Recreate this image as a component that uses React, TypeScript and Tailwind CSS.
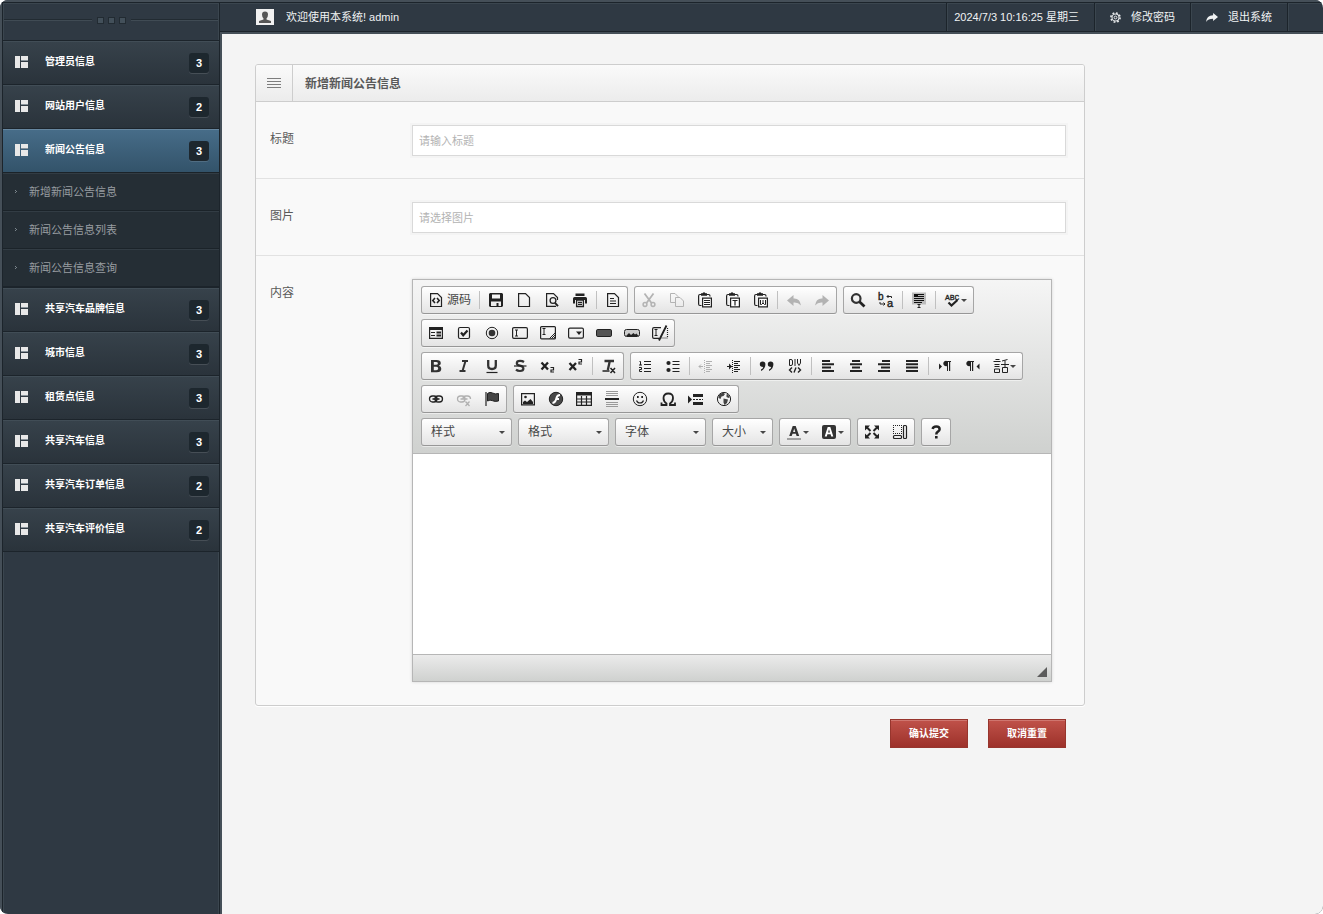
import { useState, type ReactNode } from 'react';

const dark = '#222222';

const line = { fill: 'none', stroke: dark, strokeWidth: 1.2 } as const;
const page = <path d="M2.6 1.6h6.9l4 4v8.9H2.6z" {...line} />;
const clipboard = (
  <>
    <path d="M4 2.5H3Q1.6 2.5 1.6 4v8Q1.6 13.5 3 13.5h1.5M10 2.5h1.5Q13 2.5 13 4v.5" {...line} />
    <path d="M4 1.2h1.5q1.5-1.8 3 0H10v2.500H4z" fill={dark} />
    <path d="M5.6 6.1h8.8v8.8H5.6z" fill="#fff" stroke={dark} strokeWidth={1.2} />
  </>
);

const icons: Record<string, ReactNode> = {
  source: (
    <>
      {page}
      <path d="M7 6 4.8 8.5 7 11M9 6l2.2 2.5L9 11" {...line} strokeWidth={1.6} />
    </>
  ),
  save: (
    <path fillRule="evenodd" fill={dark} d="M2 1h12l1 1v12l-1 1H2l-1-1V2zM4 2.4v4h8v-4zM3 9.5V14h2V9.5zM5 9.500V14h3.500v-3h2v3H13V9.500z" />
  ),
  newpage: page,
  preview: (
    <>
      <path d="M12 14.400H2.600V1.600h6.900l4 4V8" {...line} />
      <circle cx="9" cy="8.500" r="2.900" {...line} strokeWidth={1.300} />
      <path d="m11 10.800 3 3.400" {...line} strokeWidth={1.900} />
    </>
  ),
  print: (
    <>
      <path d="M3.500 1.500h9v2.500h-9z" fill={dark} />
      <path d="M1 6.500Q1 5 2.500 5h11Q15 5 15 6.500v5h-2V8H3v3.500H1z" fill={dark} />
      <path d="M4.600 8h6.800v6.500H4.600zM6 10.300h4M6 12.300h4" {...line} strokeWidth={1.300} />
    </>
  ),
  templates: (
    <>
      {page}
      <path d="M5 6.500h4M5 9h6M5 11.500h6" {...line} />
    </>
  ),
  cut: (
    <g fill="none" stroke="#b3b3b3" strokeWidth={1.8}>
      <path d="m3.500 1.500 7 9.500M12.500 1.500l-7 9.500" />
      <circle cx="4" cy="12.500" r="1.900" strokeWidth={1.500} />
      <circle cx="12" cy="12.500" r="1.900" strokeWidth={1.500} />
    </g>
  ),
  copy: (
    <path d="M6 10.500H1.500v-9H6l3 3V6M6.500 5.500H11l3.500 3.500v5.500h-8z" fill="none" stroke="#b3b3b3" />
  ),
  paste: (
    <>
      {clipboard}
      <path d="M7 8.500h6M7 10.500h6M7 12.500h6" {...line} strokeWidth={1} />
    </>
  ),
  pastetext: (
    <>
      {clipboard}
      <path d="M7.500 8.500h5M10 8.500v5" {...line} />
    </>
  ),
  pasteword: (
    <>
      {clipboard}
      <path d="M7.500 8v4.500h1l1.500-1.500 1.500 1.500h1V8M10 8v3.500" {...line} strokeWidth={1} />
    </>
  ),
  undo: <path d="M1 8.500 7.500 3v3.500q6.500-.5 7.500 7-3-3.500-7.500-3V14z" fill="#b3b3b3" />,
  redo: <path d="M15 8.500 8.500 3v3.500Q2 6 1 13.500q3-3.500 7.500-3V14z" fill="#b3b3b3" />,
  find: (
    <>
      <circle cx="6.200" cy="6.500" r="4.300" {...line} strokeWidth={2.200} stroke="#333" />
      <path d="m9.500 9.800 5 4.700" {...line} strokeWidth={2.800} />
    </>
  ),
  replace: (
    <>
      <text x="0" y="8" fontSize="10" fontFamily="Liberation Sans" fill={dark} stroke={dark} strokeWidth=".4">b</text>
      <text x="9" y="14.500" fontSize="11" fontFamily="Liberation Sans" fill={dark} stroke={dark} strokeWidth=".4">a</text>
      <path d="M13.500 6V4.500H9M10.500 3l-1.500 1.500L10.500 6M2 10v2h5M5.500 10.500 7 12l-1.500 1.500" {...line} strokeWidth={1} />
    </>
  ),
  selectall: (
    <>
      <path d="M1 .5h14v12H1z" fill="#bdbdbd" />
      <path d="M3 2.500h10M3 4.500h10M3 6.500h10M3 8.500h10M3 10.500h8" stroke="#111" />
      <path d="M3 2h4v3H3z" fill="#111" />
      <path d="M6.500 12.500h3M8 12.500v3M6.500 15.500h3" {...line} strokeWidth={1} />
    </>
  ),
  spell: (
    <>
      <text x="1" y="7.500" fontSize="8" fontFamily="Liberation Mono" fill={dark} stroke={dark} strokeWidth=".3">ABC</text>
      <path d="m4.500 10.500 3 3L13.500 8" {...line} strokeWidth={2.200} />
    </>
  ),
  form: (
    <>
      <path d="M1.600 2.600h12.800v10.800H1.600z" {...line} />
      <path d="M1 2h14v3H1z" fill={dark} />
      <path d="M3 7.500h4M3 10.500h4" {...line} />
      <path d="M8.500 7.500H13M8.500 10.500H13" {...line} strokeWidth={2} />
    </>
  ),
  checkbox: (
    <>
      <rect x="2.500" y="2.500" width="11" height="11" rx="1.500" {...line} />
      <path d="m5 7.500 2.200 2.700L11.500 5.500" {...line} strokeWidth={2.200} />
    </>
  ),
  radio: (
    <>
      <circle cx="8" cy="8" r="5.700" {...line} strokeWidth={1} />
      <circle cx="8" cy="8" r="3.300" fill="#333" />
    </>
  ),
  textfield: (
    <>
      <rect x=".6" y="2.600" width="14.800" height="10.800" rx="1.300" {...line} />
      <path d="M3 5h3M4.500 5v6M3 11h3" {...line} strokeWidth={1} />
    </>
  ),
  textarea: (
    <>
      <rect x=".6" y="1.600" width="14.800" height="12.300" rx="1" {...line} />
      <path d="M2.500 3.500h3M4 3.500v6M2.500 9.500h3M9.500 13.500l5.500-5.500M11.500 13.500l3.500-3.500M13.500 13.500 15 12" {...line} strokeWidth={1} />
    </>
  ),
  select: (
    <>
      <rect x=".6" y="3.100" width="14.800" height="10" rx="1.300" {...line} />
      <path d="M8 6.500h6l-3 3.500z" fill={dark} />
    </>
  ),
  button: <rect x=".5" y="4.500" width="15" height="7" rx="1.300" fill="#555" stroke={dark} />,
  imagebutton: (
    <>
      <rect x=".5" y="4.500" width="15" height="7" rx="2" fill="#ccc" stroke={dark} />
      <path d="m2 11 3-3L7 10l2.500-2L11 9.500l1.500-1 2 2.500z" fill={dark} />
    </>
  ),
  hidden: (
    <>
      <path d="M9 2.600H2Q.6 2.600.6 4v8q0 1.400 1.400 1.400h5" {...line} />
      <path d="M2.500 4.500h3M4 4.500v6M2.500 10.500h3" {...line} strokeWidth={1} />
      <path d="M13 3.500h2.500v9.500H9" {...line} strokeDasharray="1 1" />
      <path d="M14.500 .5 7 15.500" {...line} strokeWidth={1.800} />
    </>
  ),
  bold: <path fillRule="evenodd" fill="#333" d="M3 2h5.500q4.300 0 4.300 3.300 0 1.900-1.900 2.400 2.400.5 2.400 3 0 3.600-4.500 3.600H3zM5.800 4v2.800h2.100q2 0 2-1.400T7.900 4zM5.800 8.800v3.500h2.400q2 0 2-1.800T8.200 8.800z" />,
  italic: <path d="M6 3h6M3.500 13h6M9.500 3 6.500 13" {...line} stroke="#333" strokeWidth={2} />,
  underline: (
    <>
      <path d="M4.200 2v5.500q0 3.500 3.800 3.500t3.800-3.500V2" {...line} stroke="#333" strokeWidth={2.300} />
      <path d="M2.500 14.500h11" {...line} />
    </>
  ),
  strike: (
    <>
      <path d="M12 4Q10.500 2.900 8 2.900q-3.200 0-3.200 2.300Q4.800 7 8 7.600t3.400 2.900Q11.400 13 8 13q-2.500 0-4-1.300" {...line} stroke="#333" strokeWidth={2.200} />
      <path d="M2 8h12.500" {...line} />
    </>
  ),
  subscript: (
    <>
      <path d="m1.500 4.500 6.500 7M8 4.500l-6.500 7" {...line} strokeWidth={2.300} />
      <path d="M10.500 9.500h3v2.500h-2.500v2h3" {...line} />
    </>
  ),
  superscript: (
    <>
      <path d="m1.500 5 6.500 7M8 5l-6.500 7" {...line} strokeWidth={2.300} />
      <path d="M10.500 1.500h3V4h-2.500v2h3" {...line} />
    </>
  ),
  removeformat: (
    <>
      <path d="M3.500 3h9.500M8.800 3 6.800 12" {...line} stroke="#333" strokeWidth={2.300} />
      <path d="M1.500 13h7M9.500 10l4.500 5M14 10l-4.500 5" {...line} strokeWidth={1.500} />
    </>
  ),
  ol: (
    <>
      <path d="M2.500 3.500h1v3.500M2 7h3M2 9.500h2.500v2h-2v2H5" {...line} strokeWidth={1} />
      <path d="M7 3.500h7M7 6.500h7M7 10.500h7M7 13.500h7" {...line} />
    </>
  ),
  ul: (
    <>
      <circle cx="3.500" cy="5" r="2.100" fill={dark} />
      <circle cx="3.500" cy="12" r="2.100" fill={dark} />
      <path d="M7.500 3.500h7M7.500 6.500h7M7.500 10.500h7M7.500 13.500h7" {...line} />
    </>
  ),
  outdent: (
    <g fill="none" stroke="#b0b0b0">
      <path d="M6.500 2v13" strokeDasharray="1 1" />
      <path d="M8 3.500h6M8 5.500h4M8 7.500h6M8 9.500h4M8 11.500h6M8 13.500h4M5 8.500H1M3 6.500l-2 2 2 2" />
    </g>
  ),
  indent: (
    <g fill="none" stroke={dark}>
      <path d="M6.500 2v13" strokeDasharray="1 1" />
      <path d="M8 3.500h6M8 5.500h4M8 7.500h6M8 9.500h4M8 11.500h6M8 13.500h4M1 8.500h5" />
      <path d="M3 5.500 6 8.500l-3 3z" fill={dark} stroke="none" />
    </g>
  ),
  quote: <path fill={dark} d="M.8 6.300a2.800 2.800 0 1 1 5.600 0Q6.400 11 2 13V11.500Q4 10.500 4.200 9 .8 9 .8 6.300zM8.800 6.300a2.800 2.800 0 1 1 5.600 0q0 4.700-4.400 6.700v-1.500q2-1 2.200-2.500-3.400 0-3.400-2.700z" />,
  div: (
    <>
      <path d="M2.500 1.500v6H4q1.500 0 1.500-1.500V3Q5.500 1.500 4 1.500zM8 1v7M10.500 1v4L12 7.500 13.500 5V1" {...line} strokeWidth={1} />
      <path d="m5 9.500-2.500 2.500L5 14.500M11 9.500l2.500 2.500-2.500 2.500M9 9.500l-2 5" {...line} strokeWidth={1.400} />
    </>
  ),
  left: <path d="M2 3h8M2 6.300h12M2 9.600h9M2 13h12" {...line} strokeWidth={2} />,
  center: <path d="M4 3h8M2 6.300h12M4 9.600h8M2 13h12" {...line} strokeWidth={2} />,
  right: <path d="M6 3h8M2 6.300h12M5 9.600h9M2 13h12" {...line} strokeWidth={2} />,
  justify: <path d="M2 3h12M2 6.300h12M2 9.600h12M2 13h12" {...line} strokeWidth={2} />,
  ltr: (
    <>
      <path d="m2 5.500 3 3-3 3z" fill={dark} />
      <path d="M10 8a2.700 2.700 0 1 1 0-5h4v1h-.8v9h-1.200V4H11v9h-1z" fill={dark} />
    </>
  ),
  rtl: (
    <>
      <path d="m14.500 5.500-3 3 3 3z" fill={dark} />
      <path d="M5 8a2.700 2.700 0 1 1 0-5h4v1h-.8v9H7V4H6v9H5z" fill={dark} />
    </>
  ),
  language: (
    <path d="M2.500 1.500h4M.5 3.500h7M1.500 6.500h5M1.500 8.500h5M1.500 11h5v3.500h-5zM14.500 1.500 9 3M12 2.500V9M8 6.500h8M9.500 9.500h5v5h-5z" {...line} strokeWidth={1} />
  ),
  link: (
    <g {...line} strokeWidth={1.300}>
      <rect x="1.500" y="5" width="7.500" height="6" rx="3" />
      <rect x="7" y="5" width="7.500" height="6" rx="3" />
      <path d="M4.500 8h7" strokeWidth={1.600} />
    </g>
  ),
  unlink: (
    <g fill="none" stroke="#b0b0b0" strokeWidth={1.300}>
      <rect x="1.500" y="5" width="7.500" height="6" rx="3" />
      <path d="M7 8q0-3 3-3h1.500q3 0 3 3M4.500 8h7M9.500 10.500l4 4.500M13.500 10.500l-4 4.500" />
    </g>
  ),
  anchor: (
    <>
      <path d="M2 1v14" {...line} />
      <path d="M3.500 2.500Q6 .5 8.500 2t6 .5V10Q11 11 8.500 9.700T3.500 10z" fill="#444" stroke={dark} />
    </>
  ),
  image: (
    <>
      <path d="M1.600 2.600h12.800v11.300H1.600z" {...line} />
      <circle cx="5.500" cy="6" r="1.300" fill={dark} />
      <path d="M3 13v-2l2-1.500 2 1.500 3.500-3L13 11v2z" fill={dark} />
    </>
  ),
  flash: (
    <>
      <circle cx="8" cy="8" r="6.700" fill="#484848" stroke={dark} />
      <path d="M12 4Q9 4 8.300 7.500 7.500 11.500 4.500 12M8 8h3" fill="none" stroke="#fff" strokeWidth="1.900" />
    </>
  ),
  table: (
    <>
      <path d="M.6 2.600h14.800v11.800H.6zM5.500 5v9M10.500 5v9M1 8h14M1 11h14" {...line} />
      <path d="M0 1h16v3.500H0z" fill={dark} />
    </>
  ),
  rule: (
    <>
      <path d="M2 .5h12M2 2.500h12M2 4.500h12M2 11.500h12M2 13.500h12M2 15.500h12" stroke="#999" />
      <path d="M1 8h14" {...line} strokeWidth={2} />
    </>
  ),
  smiley: (
    <>
      <circle cx="8" cy="8" r="6.700" {...line} strokeWidth={1} />
      <path d="M4.500 9.500q1 2.500 3.500 2.500t3.500-2.500" {...line} />
      <path d="M5 5h1.700v2H5zM9.300 5H11v2H9.300z" fill={dark} />
    </>
  ),
  omega: (
    <path d="M1.500 11.500V14H6.500v-1.500Q3.500 10.500 3.500 7 3.500 2.500 8.300 2.500T13 7q0 3.500-3 5.500V14h5v-2.500" {...line} strokeWidth={1.800} />
  ),
  pagebreak: (
    <>
      <path d="m0 4.500 4 4L0 12.500z" fill={dark} />
      <path d="M5 4.500h10M5 12.500h10" {...line} strokeWidth={3} />
      <path d="M5 8.500h10" {...line} strokeDasharray="2 1" />
    </>
  ),
  iframe: (
    <>
      <circle cx="8" cy="8" r="6.600" {...line} strokeWidth={1} />
      <path d="M2.500 5 4 3l3-1.500L9 3 7.500 5l-2 .500-1 2.500-2-1zM11 2.500 14 6l-1.500 1-2-1 0-2zM7.500 7.500l4.500 1-1 3.500-2.500 2-1-2.500z" fill="#444" />
    </>
  ),
  color: (
    <>
      <path d="M1 15h14" stroke="#888" strokeWidth="1.500" />
      <path fillRule="evenodd" d="M6.700 2h3l3.500 10h-2.600l-.7-2.300H6.500L5.700 12H3.200zM8.200 4.500 7.100 8h2.200z" fill="#333" />
    </>
  ),
  background: (
    <>
      <rect x="1" y="1" width="14" height="14" rx="2" fill="#333" />
      <path fillRule="evenodd" d="M6.700 3h2.600l3 9.500h-2.100l-.6-2.200H6.400l-.6 2.200H3.700zM8 5.200 7 8.500h2z" fill="#fff" />
    </>
  ),
  maximize: (
    <>
      <path d="M1 1.500h5L1 6.500zM15 1.500h-5l5 5zM1 14.500h5l-5-5zM15 14.500h-5l5-5z" fill={dark} />
      <path d="m3 3.500 3.500 3.500M13 3.500 9.500 7M3 12.500 6.500 9M13 12.500 9.500 9" {...line} strokeWidth={2} />
    </>
  ),
  blocks: (
    <>
      <path d="M1 1.500h9M1 9.500h9M1.500 1v9M9.500 1v9" {...line} strokeWidth={1} strokeDasharray="1 1" />
      <rect x="1.500" y="11.500" width="8" height="3" rx="1" {...line} />
      <rect x="11.500" y="1.500" width="3" height="13" rx="1" {...line} />
    </>
  ),
  about: (
    <>
      <path d="M4.700 5Q5 2.500 8.300 2.500t3.300 2.700q0 1.500-1.700 2.500T8.300 10.500" {...line} strokeWidth={2.500} />
      <path d="M7 12h2.600v2.500H7z" fill={dark} />
    </>
  ),
};

type Tool = { icon: string; label: string; text?: string; menu?: boolean };
type Item = Tool | '|';

const t = (icon: string, label: string, extra: Partial<Tool> = {}): Tool => ({ icon, label, ...extra });

const documentTools: Item[] = [t('source', '源码', { text: '源码' }), '|', t('save', '保存'), t('newpage', '新建'), t('preview', '预览'), t('print', '打印'), '|', t('templates', '模板')];
const clipboardTools: Item[] = [t('cut', '剪切'), t('copy', '复制'), t('paste', '粘贴'), t('pastetext', '粘贴为无格式文本'), t('pasteword', '从 MS Word 粘贴'), '|', t('undo', '撤消'), t('redo', '重做')];
const editTools: Item[] = [t('find', '查找'), t('replace', '替换'), '|', t('selectall', '全选'), '|', t('spell', '拼写检查', { menu: true })];
const formTools: Item[] = [t('form', '表单'), t('checkbox', '复选框'), t('radio', '单选按钮'), t('textfield', '单行文本'), t('textarea', '多行文本'), t('select', '列表'), t('button', '按钮'), t('imagebutton', '图片按钮'), t('hidden', '隐藏域')];
const styleTools: Item[] = [t('bold', '加粗'), t('italic', '倾斜'), t('underline', '下划线'), t('strike', '删除线'), t('subscript', '下标'), t('superscript', '上标'), '|', t('removeformat', '清除格式')];
const paragraphTools: Item[] = [t('ol', '编号列表'), t('ul', '项目列表'), '|', t('outdent', '减少缩进'), t('indent', '增加缩进'), '|', t('quote', '块引用'), t('div', '创建 DIV'), '|', t('left', '左对齐'), t('center', '居中'), t('right', '右对齐'), t('justify', '两端对齐'), '|', t('ltr', '从左到右'), t('rtl', '从右到左'), t('language', '语言', { menu: true })];
const linkTools: Item[] = [t('link', '超链接'), t('unlink', '取消超链接'), t('anchor', '锚点')];
const insertTools: Item[] = [t('image', '图像'), t('flash', 'Flash'), t('table', '表格'), t('rule', '水平线'), t('smiley', '表情'), t('omega', '特殊符号'), t('pagebreak', '分页符'), t('iframe', 'IFrame')];
const colorTools: Item[] = [t('color', '文本颜色', { menu: true }), t('background', '背景颜色', { menu: true })];
const viewTools: Item[] = [t('maximize', '全屏'), t('blocks', '显示区块')];
const aboutTools: Item[] = [t('about', '关于')];

const groupBox =
  'flex h-7 items-center rounded-[3px] border border-[#a6a6a6] border-b-[#979797] bg-linear-to-b from-white to-[#e4e4e4] shadow-[0_1px_0_rgba(255,255,255,0.5)]';

function Arrow() {
  return (
    <svg viewBox="0 0 6 3" className="pointer-events-none h-[3px] w-1.5 shrink-0" aria-hidden="true">
      <path d="M0 0h6L3 3z" fill="#474747" />
    </svg>
  );
}

function Group({ items }: { items: Item[] }) {
  return (
    <div className={groupBox}>
      {items.map((item, i) =>
        item === '|' ? (
          <span key={i} className="mx-0.5 h-[18px] w-px bg-[#c0c0c0]" />
        ) : (
          <button
            key={item.icon}
            type="button"
            title={item.label}
            aria-label={item.label}
            className={
              item.text
                ? 'flex h-[26px] w-[55px] items-center gap-[3px] pl-1.5'
                : item.menu
                  ? 'flex h-[26px] w-[35px] items-center gap-px pl-1.5'
                  : 'flex h-[26px] w-7 items-center justify-center'
            }
          >
            <svg viewBox="0 0 16 16" className="h-4 w-4 shrink-0 overflow-visible" aria-hidden="true">
              {icons[item.icon]}
            </svg>
            {item.text && <span className="text-xs whitespace-nowrap text-[#474747]">{item.text}</span>}
            {item.menu && <Arrow />}
          </button>
        ),
      )}
    </div>
  );
}

function Combo({ label, small = false }: { label: string; small?: boolean }) {
  return (
    <div className={groupBox}>
      <select
        aria-label={label}
        className={`${small ? 'w-[59px]' : 'w-[89px]'} h-[26px] appearance-none bg-transparent pl-[9px] text-xs text-[#474747] outline-none`}
      >
        <option>{label}</option>
      </select>
      <span className="-ml-3 mr-1.5 flex">
        <Arrow />
      </span>
    </div>
  );
}

function Editor() {
  return (
    <div className="w-full max-w-[640px] border border-[#b6b6b6] shadow-[0_0_3px_rgba(0,0,0,0.15)]">
      <div className="flex flex-col gap-[5px] border-b border-[#b6b6b6] bg-linear-to-b from-[#f5f5f5] to-[#cfd1cf] px-2 pt-1.5 pb-[7px]">
        <div className="flex flex-wrap gap-1.5">
          <Group items={documentTools} />
          <Group items={clipboardTools} />
          <Group items={editTools} />
        </div>
        <div className="flex flex-wrap gap-1.5">
          <Group items={formTools} />
        </div>
        <div className="flex flex-wrap gap-1.5">
          <Group items={styleTools} />
          <Group items={paragraphTools} />
        </div>
        <div className="flex flex-wrap gap-1.5">
          <Group items={linkTools} />
          <Group items={insertTools} />
        </div>
        <div className="flex flex-wrap gap-1.5">
          <Combo label="样式" />
          <Combo label="格式" />
          <Combo label="字体" />
          <Combo label="大小" small />
          <Group items={colorTools} />
          <Group items={viewTools} />
          <Group items={aboutTools} />
        </div>
      </div>
      <textarea id="content" className="block h-[200px] w-full resize-none bg-white p-5 text-[13px] outline-none" />
      <div className="flex h-[27px] items-end justify-end border-t border-[#b6b6b6] bg-linear-to-b from-[#ebebeb] to-[#cfd1cf] pr-1 pb-1">
        <svg viewBox="0 0 10 10" className="h-2.5 w-2.5" aria-hidden="true">
          <path d="M10 0v10H0z" fill="#5c5c5c" />
        </svg>
      </div>
    </div>
  );
}

const menus: { name: string; count: number; children?: string[] }[] = [
  { name: '管理员信息', count: 3 },
  { name: '网站用户信息', count: 2 },
  { name: '新闻公告信息', count: 3, children: ['新增新闻公告信息', '新闻公告信息列表', '新闻公告信息查询'] },
  { name: '共享汽车品牌信息', count: 3 },
  { name: '城市信息', count: 3 },
  { name: '租赁点信息', count: 3 },
  { name: '共享汽车信息', count: 3 },
  { name: '共享汽车订单信息', count: 2 },
  { name: '共享汽车评价信息', count: 2 },
];

function Sidebar() {
  return (
    <aside className="flex w-[220px] shrink-0 flex-col border-t-2 border-l-2 border-[#454f58]">
      <div className="flex grow flex-col border-x border-t border-[#1c242b] shadow-[inset_1px_1px_0_#3b464f,inset_-1px_0_0_#3b464f]">
        <div className="flex h-[37px] items-center gap-[5px] px-px pb-[3px]">
          <span className="h-0.5 grow border-t border-[#222b32] bg-[#404b54]" />
          <span className="flex gap-1">
            <i className="h-[7px] w-[7px] border border-[#222b32] bg-[#43505a]" />
            <i className="h-[7px] w-[7px] border border-[#222b32] bg-[#43505a]" />
            <i className="h-[7px] w-[7px] border border-[#222b32] bg-[#43505a]" />
          </span>
          <span className="h-0.5 grow border-t border-[#222b32] bg-[#404b54]" />
        </div>
        <ul className="border-b border-[#1c242b]">
          {menus.map((menu) => (
            <li key={menu.name}>
              <a
                href="#"
                className={`flex h-11 items-center border-t border-[#1c242b] pr-2.5 pl-3 text-white ${
                  menu.children
                    ? 'bg-linear-to-b from-[#476d89] to-[#33536a] shadow-[inset_0_1px_0_#6787a0]'
                    : 'bg-linear-to-b from-[#37424b] to-[#2a333b] shadow-[inset_0_1px_0_#414d56]'
                }`}
              >
                <svg viewBox="0 0 13 12" className="mb-0.5 h-3 w-[13px]" aria-hidden="true">
                  <path d="M0 0h5v12H0zM6 0h7v4H6zM6 6h7v6H6z" fill="#e8e8e8" />
                  <path d="M6 4h7v1H6z" fill="#89939a" />
                </svg>
                <span className="ml-[17px] grow pb-px text-[10px] leading-4 font-bold">{menu.name}</span>
                <span className="flex h-5 w-5 items-center justify-center rounded-[3px] bg-[#1d272e] pt-px text-[11px] font-bold shadow-[0_1px_0_rgba(255,255,255,0.12)]">
                  {menu.count}
                </span>
              </a>
              {menu.children && (
                <ul className="border-b border-[#1c242b] bg-[#252e35]">
                  {menu.children.map((child) => (
                    <li key={child}>
                      <a
                        href="#"
                        className="flex h-[38px] items-center border-t border-[#1b2329] pl-3 text-[11px] text-[#989da1] shadow-[inset_0_1px_0_#323c44]"
                      >
                        <svg viewBox="0 0 2 3" className="h-[3px] w-[2px]" aria-hidden="true">
                          <path d="M0 0h1v1H0zM1 1h1v1H1zM0 2h1v1H0z" fill="#7b858c" />
                        </svg>
                        <span className="ml-3 pt-0.5">{child}</span>
                      </a>
                    </li>
                  ))}
                </ul>
              )}
            </li>
          ))}
        </ul>
      </div>
    </aside>
  );
}

const headerCell = 'flex items-center gap-2.5 border-l border-[#1c242b] px-[15px] shadow-[inset_1px_0_0_#3b464f]';

function Header() {
  return (
    <header className="border-y-2 border-[#454f58]">
      <div className="flex h-[30px] justify-between border-y border-[#1c242b] text-[11px] text-[#f0f2f3] shadow-[inset_0_1px_0_#3b464f]">
        <div className="flex items-center gap-3 pl-9">
          <svg viewBox="0 0 18 16" className="h-4 w-[18px]" aria-hidden="true">
            <path d="M0 0h18v16H0z" fill="#f1f1f1" />
            <path d="M6 5.500Q6 2.500 9 2.500t3 3Q12 8 10.500 9.500v1L15 12v2H3v-2l4.500-1.500v-1Q6 8 6 5.500z" fill="#565656" />
          </svg>
          <span>欢迎使用本系统! admin</span>
        </div>
        <nav className="flex">
          <span className="flex items-center border-l border-[#1c242b] pr-[15px] pl-[7px] shadow-[inset_1px_0_0_#3b464f]">
            2024/7/3 10:16:25 星期三
          </span>
          <a href="#" className={headerCell}>
            <svg viewBox="0 0 11 11" className="h-[11px] w-[11px]" aria-hidden="true">
              <circle cx="5.500" cy="5.500" r="4.600" fill="none" stroke="#e6e8ea" strokeWidth="1.600" strokeDasharray="1.800 1.800" />
              <circle cx="5.500" cy="5.500" r="3.500" fill="none" stroke="#e6e8ea" strokeWidth="1.100" />
              <circle cx="5.500" cy="5.500" r="1.400" fill="none" stroke="#e6e8ea" />
            </svg>
            修改密码
          </a>
          <a href="#" className={headerCell}>
            <svg viewBox="0 0 11 9" className="h-[9px] w-3" preserveAspectRatio="none" aria-hidden="true">
              <path d="M11 4 6.500 0v2.200Q.5 2.500 0 9q2-3.200 6.500-3.200V8z" fill="#f0f2f3" />
            </svg>
            退出系统
          </a>
          <span className="w-9 border-l border-[#1c242b] shadow-[inset_1px_0_0_#3b464f]" />
        </nav>
      </div>
    </header>
  );
}

const row = 'flex pt-[23px] pr-[18px] pl-3.5';
const labelStyle = 'w-[142px] shrink-0 pt-1.5 text-xs text-[#595959]';
const inputStyle =
  'h-[31px] w-full border border-[#d9d9d9] bg-white px-1.5 text-[11px] text-[#595959] shadow-[0_0_0_2px_#f4f4f4] outline-none placeholder:text-[#b3b3b3]';
const submitStyle =
  'h-[29px] border border-[#97352d] bg-linear-to-b from-[#c0524a] to-[#9d312a] px-[18px] text-[10px] font-bold text-white shadow-[inset_0_1px_0_#cf766f]';

export default function App() {
  const [title, setTitle] = useState('');
  const [picture, setPicture] = useState('');

  return (
    <div className="flex min-h-screen overflow-hidden rounded-lg bg-[#2f3943] font-['Liberation_Sans','Noto_Sans_CJK_SC',sans-serif]">
      <Sidebar />
      <div className="flex min-w-0 grow flex-col">
        <Header />
        <main className="grow border-l-2 border-[#454f58] bg-[#f4f4f4] px-[33px] pt-[30px] pb-10">
          <form className="max-w-[830px]" onSubmit={(e) => e.preventDefault()}>
            <section className="rounded-[3px] border border-[#cdcdcd] bg-[#f9f9f9] shadow-[0_1px_0_white]">
              <div className="flex h-[37px] items-stretch rounded-t-[2px] border-b border-[#cdcdcd] bg-linear-to-b from-[#fafafa] to-[#ececec]">
                <span className="flex w-[37px] items-center justify-center border-r border-[#cdcdcd]">
                  <svg viewBox="0 0 14 10" className="h-2.5 w-3.5" aria-hidden="true">
                    <path d="M0 .5h14M0 3.500h14M0 6.500h14M0 9.500h14" stroke="#7d7d7d" />
                  </svg>
                </span>
                <h1 className="self-center pt-0.5 pl-3 text-xs font-bold text-[#595959]">新增新闻公告信息</h1>
              </div>
              <div className={`${row} border-b border-[#e2e2e2] pb-[22px]`}>
                <label htmlFor="title" className={labelStyle}>
                  标题
                </label>
                <input id="title" value={title} onChange={(e) => setTitle(e.target.value)} placeholder="请输入标题" className={inputStyle} />
              </div>
              <div className={`${row} border-b border-[#e2e2e2] pb-[22px]`}>
                <label htmlFor="picture" className={labelStyle}>
                  图片
                </label>
                <input id="picture" value={picture} onChange={(e) => setPicture(e.target.value)} placeholder="请选择图片" className={inputStyle} />
              </div>
              <div className={`${row} pb-[23px]`}>
                <label htmlFor="content" className={labelStyle}>
                  内容
                </label>
                <Editor />
              </div>
            </section>
            <div className="mt-[13px] flex justify-end gap-5 pr-[19px]">
              <button type="submit" className={submitStyle}>
                确认提交
              </button>
              <button type="reset" className={submitStyle}>
                取消重置
              </button>
            </div>
          </form>
        </main>
      </div>
    </div>
  );
}
